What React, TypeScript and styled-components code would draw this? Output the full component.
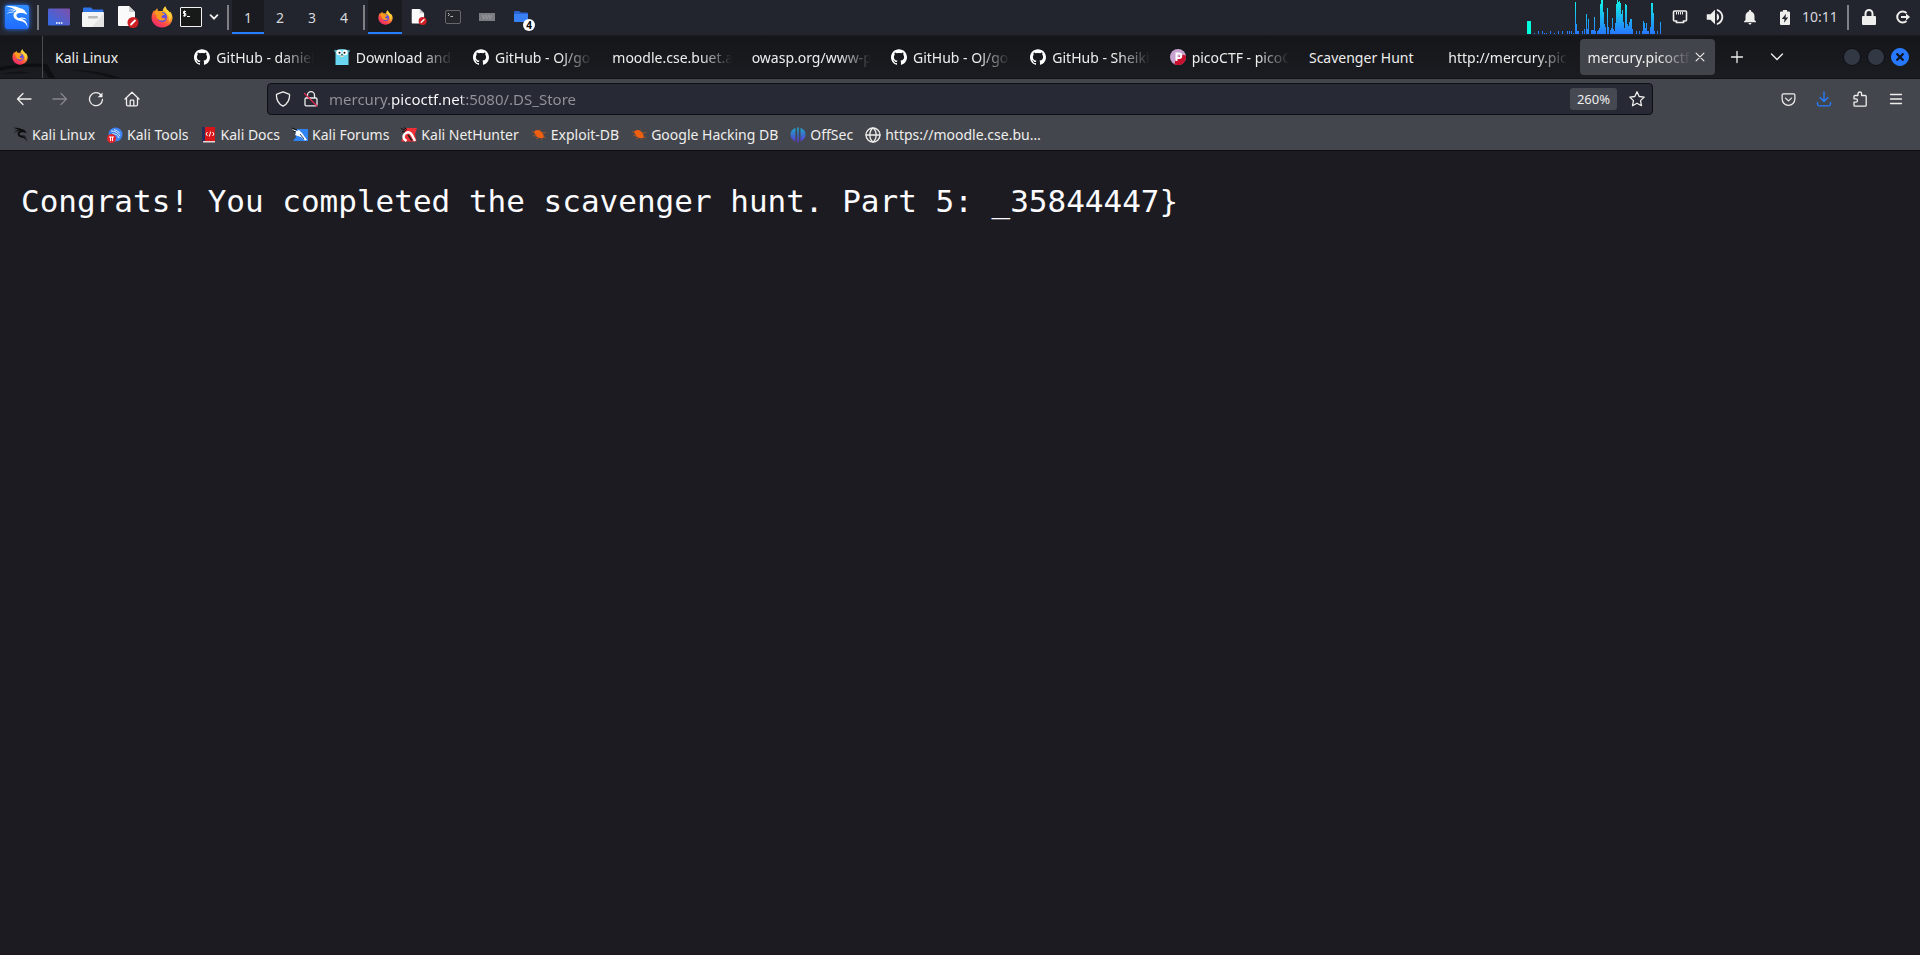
import React from "react";
import styled, { createGlobalStyle, css } from "styled-components";
import { SiGithub } from "react-icons/si";
import { MdVolumeUp, MdNotifications } from "react-icons/md";

const GlobalStyle = createGlobalStyle`
  *, *::before, *::after { box-sizing: border-box; }
  html, body, #root { height: 100%; }
  body {
    margin: 0;
    background: #1c1b22;
    color: #eeeeec;
    font-family: "Noto Sans", sans-serif;
    font-size: 14px;
  }
  button { font: inherit; color: inherit; background: none; border: 0; padding: 0; margin: 0; }
  a { color: inherit; text-decoration: none; }
  svg { display: block; flex: none; }
`;

const Screen = styled.div`
  min-height: 100%;
  display: flex;
  flex-direction: column;
`;

/* ---------- desktop panel ---------- */

const Panel = styled.header`
  display: flex;
  justify-content: space-between;
  height: 36px;
  padding-bottom: 1px;
  background: #23252e;
  border-bottom: 1px solid #1b1c21;
`;

const PanelGroup = styled.div`
  display: flex;
  align-items: stretch;
  height: 34px;
`;

const PanelButton = styled.button<{ $w?: number; $active?: boolean }>`
  position: relative;
  display: flex;
  align-items: center;
  justify-content: center;
  width: ${(p) => p.$w ?? 34}px;
  ${(p) =>
    p.$active &&
    css`
      background: #191b20;
      box-shadow: inset 0 -2px 0 #277fff;
    `}
`;

const KaliTile = styled.span`
  display: flex;
  align-items: center;
  justify-content: center;
  width: 24px;
  height: 24px;
  border-radius: 2px;
  color: #fff;
  background: linear-gradient(#2f8cff, #1f6cff);
  box-shadow: 0 0 5px #2777ff;
`;

const PanelDivider = styled.span`
  width: 8px;
  display: flex;
  align-items: center;
  justify-content: center;
  &::before {
    content: "";
    width: 2px;
    height: 25px;
    background: #7f8085;
  }
`;

const Workspace = styled(PanelButton)`
  color: #d5d8dc;
`;

const TaskBadge = styled.span`
  position: absolute;
  right: 3px;
  bottom: 3px;
  width: 12px;
  height: 12px;
  border-radius: 50%;
  background: #fff;
  color: #000;
  font-size: 10px;
  font-weight: 700;
  line-height: 12px;
  text-align: center;
`;

const Clock = styled.time`
  width: 42px;
  line-height: 34px;
  color: #d5d8dc;
  white-space: nowrap;
`;

/* ---------- tab strip ---------- */

const TabStrip = styled.div`
  position: relative;
  display: flex;
  align-items: stretch;
  height: 43px;
  background: linear-gradient(#15161a, #1b1c21);
  border-bottom: 1px solid #111216;
`;

const Wallpaper = styled.svg`
  position: absolute;
  left: 0;
  bottom: 0;
`;

const PinnedTab = styled.button`
  position: relative;
  display: flex;
  align-items: center;
  justify-content: center;
  width: 43px;
  padding-right: 2px;
  border-right: 1px solid #4a4b4f;
`;

const TabList = styled.nav`
  position: relative;
  flex: 1;
  min-width: 0;
  display: flex;
  padding-left: 2px;
`;

const TabItem = styled.div<{ $selected?: boolean }>`
  flex: 1 1 0;
  min-width: 0;
  display: flex;
  align-items: center;
  gap: 2px;
  margin: 3px 2px;
  padding: 0 8px;
  border-radius: 4px;
  ${(p) =>
    p.$selected &&
    css`
      background: #42444b;
    `}
`;

const TabButton = styled.button`
  flex: 1;
  min-width: 0;
  display: flex;
  align-items: center;
  gap: 6px;
  text-align: left;
`;

const TabLabel = styled.span<{ $fade: boolean }>`
  flex: 1;
  min-width: 0;
  overflow: hidden;
  white-space: nowrap;
  padding-top: 1px;
  line-height: 21px;
  ${(p) =>
    p.$fade &&
    css`
      mask-image: linear-gradient(to left, transparent, #000 32px);
    `}
`;

const StripActions = styled.div`
  display: flex;
  align-items: center;
  width: 203px;
  padding-right: 11px;
`;

const StripButton = styled.button`
  display: flex;
  align-items: center;
  justify-content: center;
  width: 40px;
  height: 34px;
`;

const WindowButtons = styled.div`
  display: flex;
  gap: 6px;
  margin-left: auto;
`;

const WindowButton = styled.button<{ $close?: boolean }>`
  display: flex;
  align-items: center;
  justify-content: center;
  width: 18px;
  height: 18px;
  border-radius: 50%;
  border: 1px solid ${(p) => (p.$close ? "#277fff" : "#0f1013")};
  background: ${(p) => (p.$close ? "#2777ff" : "#333845")};
  color: #10131a;
`;

/* ---------- browser toolbars ---------- */

const NavBar = styled.div`
  display: flex;
  align-items: center;
  height: 40px;
  padding: 0 6px;
  background: #44464d;
`;

const ToolButton = styled.button<{ $tone?: string }>`
  display: flex;
  align-items: center;
  justify-content: center;
  width: 36px;
  height: 32px;
  color: ${(p) => p.$tone ?? "#eeeeec"};
`;

const Spring = styled.div`
  flex: 0 1 117px;
`;

const UrlBar = styled.form`
  flex: 1;
  min-width: 0;
  display: flex;
  align-items: center;
  height: 32px;
  margin: 0;
  padding: 0 3px;
  background: #272935;
  border: 1px solid #0f1014;
  border-radius: 4px;
`;

const UrlButton = styled.button`
  display: flex;
  align-items: center;
  justify-content: center;
  width: 24px;
  height: 24px;
  margin-right: 4px;
`;

/* The host is painted brighter than the rest of the address. */
const UrlInput = styled.input`
  flex: 1;
  min-width: 0;
  height: 28px;
  padding: 0;
  margin-left: 2px;
  border: 0;
  outline: 0;
  font: 15px "Noto Sans", sans-serif;
  color: transparent;
  background: linear-gradient(to right, #93949a 61px, #fff 61px, #fff 133px, #93949a 133px);
  background-clip: text;
  -webkit-background-clip: text;
`;

const ZoomButton = styled.button`
  height: 22px;
  width: 47px;
  margin-right: 8px;
  border-radius: 3px;
  background: #464852;
  font-size: 13px;
`;

const StarButton = styled(UrlButton)`
  margin-right: 0;
`;

const BookmarkBar = styled.nav`
  display: flex;
  align-items: center;
  gap: 12px;
  height: 32px;
  padding: 0 12px;
  background: #44464d;
  border-bottom: 1px solid #0c0c0f;
`;

const Bookmark = styled.a`
  display: flex;
  align-items: center;
  gap: 4px;
  line-height: 20px;
  white-space: nowrap;
`;

const Page = styled.main`
  flex: 1;
  padding: 32px 21px;
  background: #1c1b22;
  border-bottom: 2px solid #1d1820;
`;

const PageText = styled.pre`
  margin: 0;
  font-family: "DejaVu Sans Mono", monospace;
  font-size: 31px;
  line-height: 36px;
  color: #fbfbfe;
  white-space: pre-wrap;
`;

/* ---------- icons ---------- */

const Dragon = ({ size, color }: { size: number; color: string }) => (
  <svg width={size} height={size} viewBox="0 0 24 24" fill={color} aria-hidden="true">
    <path d="M1 1.200C6 .600 11.500 1.200 15 3.300l2.300.5 2.700 1.900.4 1.300 1.600 1.500-.4 1-2.600-1.200-2.500-.3c-2-.3-4.500 0-5 1.800-.5 2.200 2 3.600 4.800 4.100 3.700.7 6.200 3.200 6.200 8.600-1-3.800-3.200-6-6.900-6.500-4.200-.5-7.300-2.700-7.100-6C8.600 8 9.700 6.700 11.500 5.900 9 3.500 5.500 2 1 1.200z" />
    <path d="M2.300 5.200c3-1 6-1 8.300-.1l-.9.8c-2.300-.6-4.700-.6-7.400-.7zM1.500 8.800c2.300-1.600 4.700-2.300 7.500-2.200l-.7.9c-2.400 0-4.600.4-6.800 1.300z" />
    <path d="M13.500 13.200c3.500-1.200 6.300-.5 8.500 1.600-2.500-1-4.800-1.200-7-.6z" />
  </svg>
);

function Firefox({ size }: { size: number }) {
  const id = React.useId();
  return (
    <svg width={size} height={size} viewBox="0 0 24 24" aria-hidden="true">
      <defs>
        <linearGradient id={id + "a"} x1="0.85" y1="0" x2="0.2" y2="1">
          <stop offset="0.1" stopColor="#ffe23e" />
          <stop offset="0.4" stopColor="#ff9a2b" />
          <stop offset="0.7" stopColor="#ff4a44" />
          <stop offset="1" stopColor="#e5227b" />
        </linearGradient>
      </defs>
      <path
        fill={`url(#${id}a)`}
        d="M12 23.5C5.400 23.500.600 18.500.600 12.500c0-3 1.200-6.200 3-8.200 0 1 .2 1.600.5 2C5 4.500 6 3.200 7.200 2.500c-.3 1.300 0 2.300.6 3h5C12.800 3.500 14.200 1.200 16 .3c0 2.500 1.500 3.700 3 5 .8.700 1.400 1.500 1.700 2.200.2-.5.1-1-.1-1.500 2 1.800 2.900 4.500 2.900 6.900 0 6-5 10.600-11.500 10.600z"
      />
      <circle cx="12.300" cy="12.300" r="5.300" fill="#6a4be0" />
      <path fill="#4a63d8" d="M8.500 8c2-1.800 5-1.800 7-.3l.8 3-4.500-1z" />
      <path
        fill="#ff9a1f"
        d="M3.600 5.800c1.300-.9 3-.8 4.300-.1 1.500-.3 3.200.2 4.200 1 .8 1.100 1.500 1.600 3 1.700-.2 1.200-1.900 1.500-3 2.200-1 .7-.8 2 .3 2.600 1.200.6 2.600 0 3.700-.2-.6 1.900-2.300 3-4.400 2.900C8 15.800 5.500 13 6 9.800 5 9.800 4 8 3.600 5.800z"
      />
      <path fill="#ffd53a" d="M16.100 1.500c.3 2.700 4.700 4.400 5.500 8.500.6 3-.6 5.700-2.300 7.200 1.200-3.400.6-6.500-1.600-8.200-2-1.600-2.900-4.400-1.600-7.500z" />
    </svg>
  );
}

const DesktopIcon = () => (
  <svg width="22" height="18" viewBox="0 0 22 18" aria-hidden="true">
    <defs>
      <linearGradient id="desk" x1="0" y1="1" x2="1" y2="0">
        <stop offset="0.2" stopColor="#3b67df" />
        <stop offset="1" stopColor="#8150a8" />
      </linearGradient>
    </defs>
    <rect width="22" height="17" y="0.500" rx="1" fill="url(#desk)" />
    <path d="M8 15h6.500" stroke="#fff" strokeWidth="1.600" strokeDasharray="1.600 0.800" />
  </svg>
);

const FolderIcon = () => (
  <svg width="22" height="20" viewBox="0 0 22 20" aria-hidden="true">
    <path d="M1 1.500Q1 .500 2 .500h7l2 2h9.500q.8 0 .8.800V8H1z" fill="#2f74e6" />
    <rect y="5" width="22" height="15" rx="1" fill="#f4f4f4" />
    <path d="M22 6v13q0 1-1 1H10z" fill="#e4e4e4" />
    <rect x="6" y="9" width="10" height="2.500" rx="1" fill="#b9b9b9" />
  </svg>
);

const NoteIcon = ({ size }: { size: number }) => (
  <svg width={size} height={size} viewBox="0 0 22 22" aria-hidden="true">
    <path d="M1 1q0-1 1-1h10l6 6v13q0 1-1 1H2q-1 0-1-1z" fill="#fafafa" />
    <path d="M12 0l6 6h-5q-1 0-1-1z" fill="#cfcfcf" />
    <circle cx="16" cy="16.500" r="5.500" fill="#cf1f25" />
    <path d="M13.500 19l5-5" stroke="#fff" strokeWidth="1.800" />
  </svg>
);

const TerminalIcon = () => (
  <svg width="22" height="20" viewBox="0 0 22 20" aria-hidden="true">
    <rect x="0.500" y="0.500" width="21" height="19" rx="0.500" fill="#181a19" stroke="#f2f2f2" />
    <path d="M6 4.500H3.500V6.500H5.800V8.800H3M4.500 3.500v6M7 9.500h3" stroke="#fff" fill="none" />
  </svg>
);

const ChevronIcon = ({ size, weight }: { size: number; weight: number }) => (
  <svg width={size} height={size} viewBox="0 0 16 16" fill="none" stroke="currentColor" strokeWidth={weight} strokeLinecap="round" aria-hidden="true">
    <path d="M2.500 5L8 10.500 13.500 5" />
  </svg>
);

const SmallTerminalIcon = () => (
  <svg width="16" height="14" viewBox="0 0 16 14" aria-hidden="true">
    <rect x="0.500" y="0.500" width="15" height="13" rx="1.500" fill="#25262b" stroke="#66676a" />
    <path d="M3 3l1.500 1.500L3 6M5.500 6.500h2.500" stroke="#bbb" fill="none" />
  </svg>
);

const KeyboardIcon = () => (
  <svg width="16" height="8" viewBox="0 0 16 8" aria-hidden="true">
    <rect width="16" height="8" fill="#7c7d81" />
    <path d="M3 3h10M4 5h8" stroke="#a5a6aa" strokeDasharray="2 1" />
  </svg>
);

const SmallFolderIcon = () => (
  <svg width="16" height="12" viewBox="0 0 16 12" aria-hidden="true">
    <path d="M1 1q0-1 1-1h4l2 1.500h6q1 0 1 1V11H1z" fill="#2a62cf" />
    <path d="M1 3h14v7q0 1-1 1H2q-1 0-1-1z" fill="#3a80f5" />
  </svg>
);

/* [x, height] of each sample in the load graph */
const samples: [number, number][] = [
  [7, 1], [11, 3], [15, 3], [17, 1], [19, 1], [23, 3], [27, 1], [31, 3], [35, 3], [40, 3], [42, 3], [44, 3], [46, 1],
  [48, 32], [49, 10], [50, 3], [51, 3], [55, 3], [57, 5], [59, 20], [60, 5], [61, 15], [64, 4], [65, 4], [66, 4], [67, 17], [68, 3],
  [70, 3], [71, 4], [72, 6], [73, 30], [74, 34], [75, 34], [76, 22], [77, 10], [78, 7], [80, 26], [81, 7], [83, 4], [84, 6],
  [85, 16], [86, 5], [87, 3], [88, 11], [89, 30], [90, 34], [91, 32], [92, 33], [93, 31], [94, 20], [95, 24], [96, 12],
  [97, 6], [98, 30], [99, 29], [100, 10], [101, 8], [102, 12], [103, 15], [104, 15], [105, 5], [109, 3], [112, 3],
  [115, 3], [116, 13], [117, 11], [118, 6], [119, 11], [120, 3], [121, 3], [123, 7], [124, 31], [125, 31], [126, 21],
  [127, 3], [130, 3], [133, 12],
];

const LoadGraph = () => (
  <svg width="135" height="34" viewBox="0 0 135 34" role="img" aria-label="CPU load">
    <defs>
      <linearGradient id="load" gradientUnits="userSpaceOnUse" x1="0" y1="0" x2="0" y2="34">
        <stop offset="0" stopColor="#0ff5e4" />
        <stop offset="1" stopColor="#2777ff" />
      </linearGradient>
    </defs>
    <rect x="0" y="21" width="4" height="13" fill="#00ffdd" />
    {samples.map(([x, h]) => (
      <rect key={x} x={x} y={34 - h} width="1" height={h} fill="url(#load)" />
    ))}
  </svg>
);

const EthernetIcon = () => (
  <svg width="16" height="14" viewBox="0 0 16 14" fill="none" stroke="currentColor" aria-hidden="true">
    <path strokeWidth="1.600" d="M2.500 1h11q1 0 1 1v8q0 1-1 1h-2v1.500h-7V11h-2q-1 0-1-1V2q0-1 1-1z" />
    <path d="M4.500 2v2.500M6.500 2v2.500M8.500 2v2.500M10.500 2v2.500" />
  </svg>
);

const BatteryIcon = () => (
  <svg width="10" height="15" viewBox="0 0 10 15" aria-hidden="true">
    <path fill="currentColor" d="M3 0h4v1.500h2q1 0 1 1V14q0 1-1 1H1q-1 0-1-1V2.500q0-1 1-1h2z" />
    <path fill="#23252e" d="M6 3.800L1.800 9h2.700L4 12.700 8.200 7.500H5.500z" />
  </svg>
);

const LockIcon = () => (
  <svg width="14" height="16" viewBox="0 0 14 16" aria-hidden="true">
    <rect y="7" width="14" height="9" rx="1" fill="currentColor" />
    <path d="M3.500 8V4.500a3.500 3.500 0 0 1 7 0V8" fill="none" stroke="currentColor" strokeWidth="2" />
  </svg>
);

const LogoutIcon = () => (
  <svg width="16" height="14" viewBox="0 0 16 14" fill="none" stroke="currentColor" strokeWidth="2" aria-hidden="true">
    <path d="M11.500 3A5.500 5.500 0 1 0 11.500 11M6 7h6" />
    <path d="M11 3.500L15 7l-4 3.500z" fill="currentColor" stroke="none" />
  </svg>
);

const Gopher = () => (
  <svg width="16" height="16" viewBox="0 0 16 16" aria-hidden="true">
    <path fill="#6ad7f2" d="M1 1.500Q8-1.500 15 1.500L14.500 3v13h-13V3z" />
    <circle cx="1.500" cy="2" r="1.300" fill="#4f9db3" />
    <circle cx="14.500" cy="2" r="1.300" fill="#4f9db3" />
    <circle cx="5" cy="3.500" r="2.700" fill="#fff" />
    <circle cx="11" cy="3.500" r="2.700" fill="#fff" />
    <circle cx="5.500" cy="3.700" r="1" fill="#111" />
    <circle cx="10.500" cy="3.700" r="1" fill="#111" />
    <path fill="#111" d="M7 5.500h2v1H7z" />
    <path fill="#f3d9b5" d="M6.500 6.500h3V8h-3z" />
  </svg>
);

const PicoIcon = () => (
  <svg width="16" height="16" viewBox="0 0 16 16" aria-hidden="true">
    <circle cx="8" cy="8" r="8" fill="#c9a3cf" />
    <path fill="#c8102e" d="M11.500 5.500l4.400 1A8 8 0 0 1 4.500 15.200l1-4.700z" />
    <path d="M6.500 12V4.500H9a2.200 2.200 0 0 1 0 4.500H6.500" fill="none" stroke="#fff" strokeWidth="2" />
  </svg>
);

const Stroke = styled.svg.attrs({ viewBox: "0 0 16 16", "aria-hidden": true })<{ $size?: number }>`
  width: ${(p) => p.$size ?? 16}px;
  height: ${(p) => p.$size ?? 16}px;
  fill: none;
  stroke: currentColor;
  stroke-width: 1.300;
  stroke-linecap: round;
  stroke-linejoin: round;
`;

const ToolsIcon = () => (
  <svg width="16" height="16" viewBox="0 0 16 16" aria-hidden="true">
    <circle cx="8.500" cy="7.500" r="7" fill="#3a83f1" />
    <path d="M4 4q6 0 9 5M5 7q5-1 7 4M7 2.500q4 1 6 4" stroke="#dce9fb" fill="none" />
    <circle cx="4.500" cy="11.500" r="4.500" fill="#e0262c" />
    <path d="M2 10h5M3.500 10v4M5.500 10v4" stroke="#fff" />
  </svg>
);

const DocsIcon = () => (
  <svg width="16" height="16" viewBox="0 0 16 16" aria-hidden="true">
    <path fill="#d81519" d="M3 0h11v14H3z" />
    <path fill="#26305c" d="M1 0h3v15H1z" />
    <path fill="#e8d5d5" d="M2 14h12v1.500H2z" />
    <path d="M6.500 5L5 7l1.500 2M11.500 5L13 7l-1.500 2M9.700 4.500l-1.400 5" stroke="#fff" fill="none" />
  </svg>
);

const ForumsIcon = () => (
  <svg width="16" height="16" viewBox="0 0 16 16" aria-hidden="true">
    <path fill="#2f83f0" d="M3 2h13v12H1l3-4z" />
    <path fill="#fff" d="M0 2l5 2 2-1 3 3 5 7-2 .5L9 10l-3-1-3-1 1-2z" />
    <path d="M0 1l5 2M1 4l3 1" stroke="#111" />
    <path d="M8 7l4 5" stroke="#2a3c68" />
  </svg>
);

const HunterIcon = () => (
  <svg width="16" height="16" viewBox="0 0 16 16" aria-hidden="true">
    <path fill="#ee2f38" d="M4 1h12l-2 6 1.500 7.500H0L3 9z" />
    <path d="M0 1.500l5 2M1 4.500l3 .500M3 .500l3 2" stroke="#111" />
    <path d="M14 14L11 8Q8.500 4 5 6T3 12l2.500 2" stroke="#fff" strokeWidth="2.400" fill="none" />
    <path d="M7 8l4 5.500" stroke="#222" strokeWidth="1.600" />
  </svg>
);

const BugIcon = () => (
  <svg width="16" height="16" viewBox="0 0 16 16" aria-hidden="true">
    <path fill="#ee5f12" d="M3 4.500q3.500-2.500 6.500-.500t3.500 6.500q-3.500 1.200-6 0T3 4.500z" />
    <path d="M4 6L1 4.500M6 9l-4-.500M8 10.500l-3 1.500M8 4l1.500-1.500M11 6l4-.500M12 9l3 2M10 11l1 2" stroke="#b5561f" strokeWidth="0.800" />
  </svg>
);

const OffsecIcon = () => (
  <svg width="16" height="16" viewBox="0 0 16 16" aria-hidden="true">
    <defs>
      <linearGradient id="offsec" x1="0" y1="0" x2="0" y2="1">
        <stop offset="0" stopColor="#1ba8c9" />
        <stop offset="1" stopColor="#5a35cf" />
      </linearGradient>
    </defs>
    <path fill="url(#offsec)" d="M5.500 1v13.500Q.500 12.500.500 7.500T5.500 1zM7.200.500h1.600v15H7.200zM10.500 1q5 1.500 5 6.500t-5 7z" />
  </svg>
);

const GlobeIcon = () => (
  <Stroke>
    <circle cx="8" cy="8" r="7" />
    <path d="M1 8h14M8 1C3.800 4 3.800 12 8 15M8 1c4.200 3 4.200 11 0 14" />
  </Stroke>
);

/* ---------- data ---------- */

const tabs: { title: string; icon?: React.ReactNode; fade?: boolean; selected?: boolean }[] = [
  { title: "Kali Linux" },
  { title: "GitHub - daniel", icon: <SiGithub size={16} color="#fff" />, fade: true },
  { title: "Download and", icon: <Gopher />, fade: true },
  { title: "GitHub - OJ/go", icon: <SiGithub size={16} color="#fff" />, fade: true },
  { title: "moodle.cse.buet.a", fade: true },
  { title: "owasp.org/www-p", fade: true },
  { title: "GitHub - OJ/go", icon: <SiGithub size={16} color="#fff" />, fade: true },
  { title: "GitHub - Sheikh", icon: <SiGithub size={16} color="#fff" />, fade: true },
  { title: "picoCTF - picoC", icon: <PicoIcon />, fade: true },
  { title: "Scavenger Hunt" },
  { title: "http://mercury.pico", fade: true },
  { title: "mercury.picoctf.", fade: true, selected: true },
];

const bookmarks: { label: string; icon: React.ReactNode }[] = [
  { label: "Kali Linux", icon: <Dragon size={16} color="#0c0c0d" /> },
  { label: "Kali Tools", icon: <ToolsIcon /> },
  { label: "Kali Docs", icon: <DocsIcon /> },
  { label: "Kali Forums", icon: <ForumsIcon /> },
  { label: "Kali NetHunter", icon: <HunterIcon /> },
  { label: "Exploit-DB", icon: <BugIcon /> },
  { label: "Google Hacking DB", icon: <BugIcon /> },
  { label: "OffSec", icon: <OffsecIcon /> },
  { label: "https://moodle.cse.bu…", icon: <GlobeIcon /> },
];

export default function App() {
  return (
    <Screen>
      <GlobalStyle />
      <Panel>
        <PanelGroup>
          <PanelButton aria-label="Applications">
            <KaliTile><Dragon size={24} color="#fff" /></KaliTile>
          </PanelButton>
          <PanelDivider />
          <PanelButton aria-label="Show desktop"><DesktopIcon /></PanelButton>
          <PanelButton aria-label="Files"><FolderIcon /></PanelButton>
          <PanelButton $w={36} aria-label="Text editor"><NoteIcon size={22} /></PanelButton>
          <PanelButton $w={32} aria-label="Firefox"><Firefox size={22} /></PanelButton>
          <PanelButton $w={26} aria-label="Terminal"><TerminalIcon /></PanelButton>
          <PanelButton $w={20} aria-label="More terminals"><ChevronIcon size={10} weight={3} /></PanelButton>
          <PanelDivider />
          {[1, 2, 3, 4].map((n) => (
            <Workspace key={n} $w={32} $active={n === 1}>{n}</Workspace>
          ))}
          <PanelDivider />
          <PanelButton $active aria-label="Firefox window"><Firefox size={15} /></PanelButton>
          <PanelButton aria-label="Text editor window"><NoteIcon size={16} /></PanelButton>
          <PanelButton aria-label="Terminal window"><SmallTerminalIcon /></PanelButton>
          <PanelButton aria-label="Keyboard window"><KeyboardIcon /></PanelButton>
          <PanelButton aria-label="File windows">
            <SmallFolderIcon />
            <TaskBadge>4</TaskBadge>
          </PanelButton>
        </PanelGroup>
        <PanelGroup>
          <LoadGraph />
          <PanelButton $w={35} aria-label="Network"><EthernetIcon /></PanelButton>
          <PanelButton $w={35} aria-label="Volume"><MdVolumeUp size={22} /></PanelButton>
          <PanelButton $w={35} aria-label="Notifications"><MdNotifications size={18} /></PanelButton>
          <PanelButton $w={35} aria-label="Battery"><BatteryIcon /></PanelButton>
          <Clock>10:11</Clock>
          <PanelDivider />
          <PanelButton aria-label="Lock screen"><LockIcon /></PanelButton>
          <PanelButton aria-label="Log out"><LogoutIcon /></PanelButton>
        </PanelGroup>
      </Panel>

      <TabStrip>
        <Wallpaper width="140" height="16" viewBox="0 0 140 16" aria-hidden="true">
          <path d="M0 5Q24 0 47 2l8 14h-6L42 5Q20 4 0 9z" fill="#0e0f12" />
          <path d="M70 8q30 0 50 8h-8Q92 10 70 8zM0 12q20-4 30-1" fill="#101114" />
        </Wallpaper>
        <PinnedTab aria-label="Firefox View"><Firefox size={16} /></PinnedTab>
        <TabList aria-label="Tabs">
          {tabs.map((tab, i) => (
            <TabItem key={i} $selected={tab.selected}>
              <TabButton>
                {tab.icon}
                <TabLabel $fade={!!tab.fade}>{tab.title}</TabLabel>
              </TabButton>
              {tab.selected && (
                <button aria-label="Close tab">
                  <Stroke $size={14}><path d="M3.500 3.500l9 9M12.500 3.500l-9 9" /></Stroke>
                </button>
              )}
            </TabItem>
          ))}
        </TabList>
        <StripActions>
          <StripButton aria-label="New tab"><Stroke><path d="M8 2.500v11M2.500 8h11" /></Stroke></StripButton>
          <StripButton aria-label="List all tabs"><ChevronIcon size={16} weight={1.3} /></StripButton>
          <WindowButtons>
            <WindowButton aria-label="Minimize" />
            <WindowButton aria-label="Maximize" />
            <WindowButton $close aria-label="Close window">
              <svg width="8" height="8" viewBox="0 0 8 8" stroke="currentColor" strokeWidth="2.200" aria-hidden="true">
                <path d="M.500.500l7 7M7.500.500l-7 7" />
              </svg>
            </WindowButton>
          </WindowButtons>
        </StripActions>
      </TabStrip>

      <NavBar>
        <ToolButton aria-label="Back"><Stroke><path d="M15 8H1.500M7 2.500L1.500 8 7 13.500" /></Stroke></ToolButton>
        <ToolButton $tone="#85868b" aria-label="Forward"><Stroke><path d="M1 8h13.500M9 2.500L14.500 8 9 13.500" /></Stroke></ToolButton>
        <ToolButton aria-label="Reload">
          <Stroke>
            <path d="M12.800 3.800A6.500 6.500 0 1 0 14.500 8.500" />
            <path d="M14.500 1.500v4.800H9.700z" fill="currentColor" stroke="none" />
          </Stroke>
        </ToolButton>
        <ToolButton aria-label="Home">
          <Stroke>
            <path d="M1 8l7-6.800L15 8M2.500 7v6.500q0 1.300 1.300 1.300h8.400q1.300 0 1.300-1.300V7M6.200 14.800V10q0-.800.800-.800h2q.8 0 .8.800v4.800" />
          </Stroke>
        </ToolButton>
        <Spring />
        <UrlBar onSubmit={(e) => e.preventDefault()}>
          <UrlButton type="button" aria-label="Tracking protection">
            <Stroke><path d="M8 .8l6 2.400q.6 0 .6.800c0 5-2.200 9-6.600 11.200C3.600 13 1.400 9 1.400 4q0-.600.600-.800z" /></Stroke>
          </UrlButton>
          <UrlButton type="button" aria-label="Connection is not secure">
            <Stroke>
              <path d="M4.500 7V4.200a3.500 3.500 0 0 1 7 0V7M3.200 7h9.600q1.200 0 1.200 1.200v5.400q0 1.200-1.200 1.200H3.200Q2 14.800 2 13.600V8.200Q2 7 3.200 7z" />
              <path d="M1.500 2.500l12.500 12.500" stroke="#e22850" />
            </Stroke>
          </UrlButton>
          <UrlInput aria-label="Address" defaultValue="mercury.picoctf.net:5080/.DS_Store" />
          <ZoomButton type="button">260%</ZoomButton>
          <StarButton type="button" aria-label="Bookmark this page">
            <Stroke><path d="M8 .8l2.200 4.700 5 .6-3.700 3.500 1 5.100L8 12.200l-4.500 2.500 1-5.100L.8 6.100l5-.6z" /></Stroke>
          </StarButton>
        </UrlBar>
        <Spring />
        <ToolButton aria-label="Save to Pocket">
          <Stroke $size={15}>
            <path d="M2.500 2h11q1.300 0 1.300 1.300V7.500a6.800 6.800 0 0 1-13.600 0V3.300Q1.200 2 2.500 2zM4.800 6.500L8 9.500l3.200-3" />
          </Stroke>
        </ToolButton>
        <ToolButton $tone="#277fff" aria-label="Downloads">
          <Stroke><path d="M8 .8v9.500M4 6.500l4 4 4-4M1.500 11.500v1.800q0 1.500 1.500 1.500h10q1.500 0 1.500-1.500v-1.800" /></Stroke>
        </ToolButton>
        <ToolButton aria-label="Extensions">
          <Stroke>
            <path d="M6 4.500V2.800a1.800 1.800 0 0 1 3.600 0v1.700h3.600q1 0 1 1v8.700q0 1-1 1H3q-1 0-1-1v-3h1.800a1.600 1.600 0 0 0 0-3.400H2V5.500q0-1 1-1z" />
          </Stroke>
        </ToolButton>
        <ToolButton aria-label="Menu"><Stroke><path d="M2.500 3.500h11M2.500 8h11M2.500 12.500h11" /></Stroke></ToolButton>
      </NavBar>

      <BookmarkBar aria-label="Bookmarks">
        {bookmarks.map((b) => (
          <Bookmark key={b.label} href="#">
            {b.icon}
            {b.label}
          </Bookmark>
        ))}
      </BookmarkBar>

      <Page>
        <PageText>Congrats! You completed the scavenger hunt. Part 5: _35844447{"}"}</PageText>
      </Page>
    </Screen>
  );
}
